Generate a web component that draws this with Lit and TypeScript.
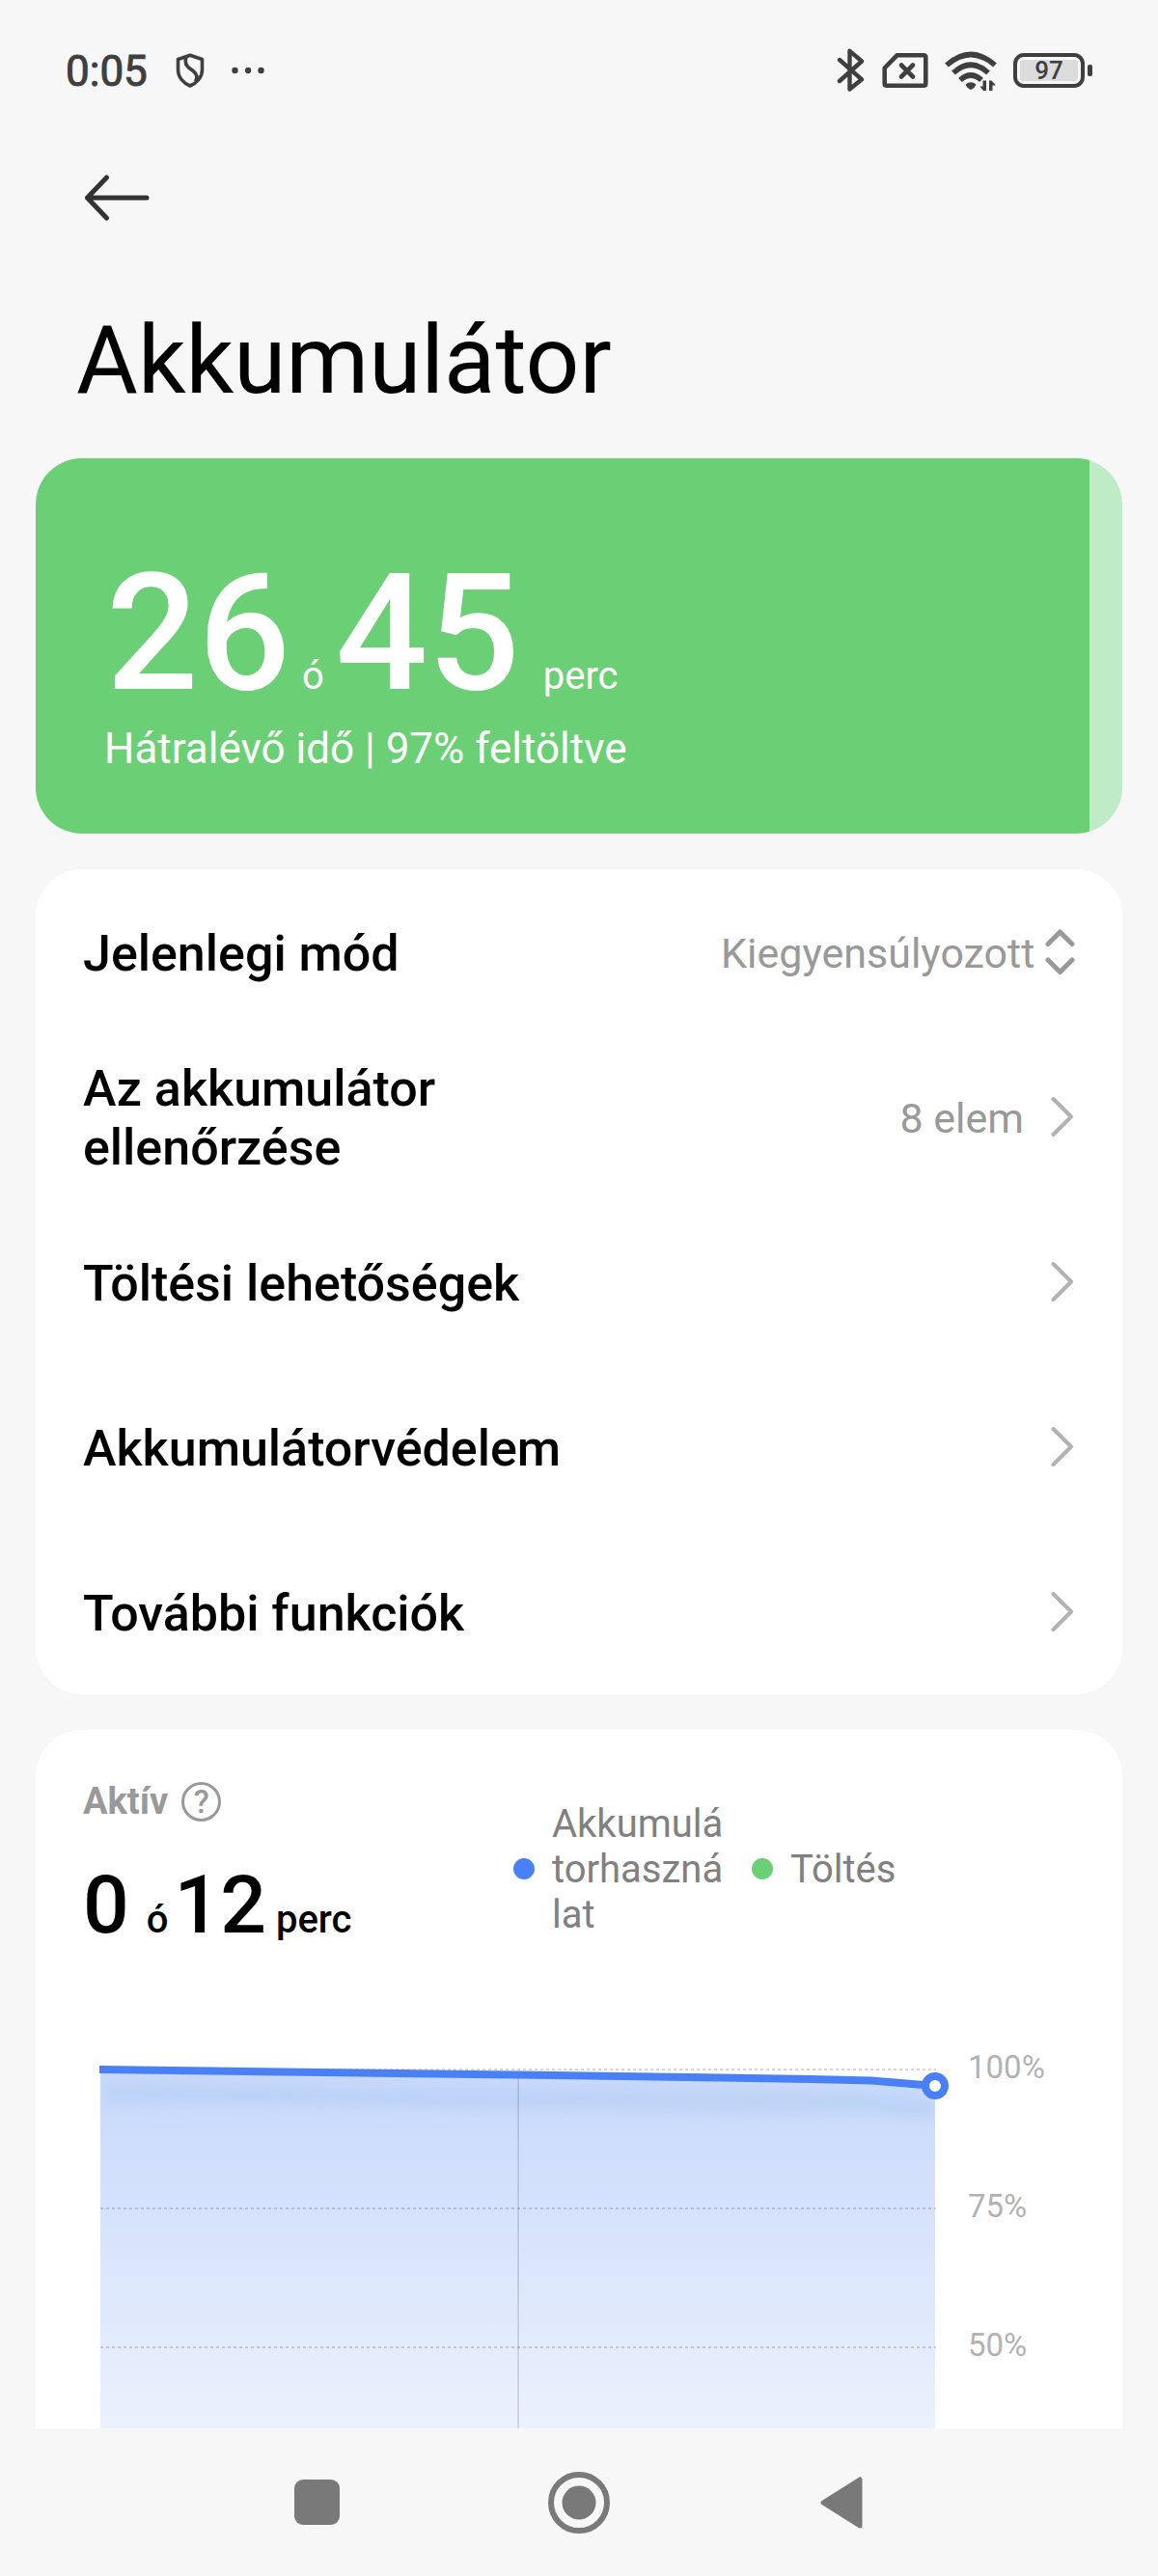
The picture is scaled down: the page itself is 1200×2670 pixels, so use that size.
import { LitElement, html, css, svg, nothing } from "lit";
import { customElement, property } from "lit/decorators.js";

const chevron = html`<svg class="chevron" width="25" height="43" viewBox="0 0 25 43" aria-hidden="true">
  <path d="M2.500 3 L21 21.500 L2.500 40" fill="none" stroke="#b2b2b2" stroke-width="4" stroke-linecap="round" stroke-linejoin="round" />
</svg>`;

@customElement("status-bar")
class StatusBar extends LitElement {
  static styles = css`
    :host {
      display: flex;
      align-items: center;
      justify-content: space-between;
      height: 146px;
      padding: 0 68px;
      box-sizing: border-box;
      color: #3f3f3f;
    }
    .side {
      display: flex;
      align-items: center;
    }
    .time {
      padding-top: 2px;
      font-size: 44px;
      line-height: 50px;
      margin-right: 29px;
      -webkit-text-stroke: 1px #3f3f3f;
    }
    .dots {
      margin-left: 28px;
    }
    .right {
      gap: 17px;
    }
    .battery {
      display: flex;
      align-items: center;
      gap: 3px;
    }
    .cell {
      display: flex;
      box-sizing: border-box;
      width: 74px;
      height: 36px;
      padding: 3px;
      border: 4px solid #3f3f3f;
      border-radius: 11px;
    }
    .level {
      flex: 1;
      border-radius: 3px;
      background: #dcdcdc;
      text-align: center;
      font-size: 26px;
      line-height: 22px;
      font-weight: 500;
    }
    .tip {
      width: 5px;
      height: 12px;
      border-radius: 2px;
      background: #3f3f3f;
    }
    svg {
      display: block;
    }
  `;

  render() {
    return html`
      <div class="side">
        <span class="time">0:05</span>
        <svg width="30" height="36" viewBox="0 0 30 36" fill="none" stroke="#3f3f3f" stroke-width="3.600" stroke-linejoin="round" aria-hidden="true">
          <path d="M15 2.200 L27.500 6.500 V17.500 C27.500 25 22 31 15 34 C8 31 2.500 25 2.500 17.500 V6.500 Z" />
          <path d="M10.800 4.500 C9.500 9.500 10.500 13 14 15.500 L18.500 18.800 C22.500 22 23 25.500 20.500 29.500" />
        </svg>
        <svg class="dots" width="34" height="8" viewBox="0 0 34 8" fill="#3f3f3f" aria-hidden="true">
          <circle cx="3.500" cy="4" r="3.200" />
          <circle cx="17" cy="4" r="3.200" />
          <circle cx="30.500" cy="4" r="3.200" />
        </svg>
      </div>
      <div class="side right">
        <svg width="30" height="46" viewBox="0 0 30 46" fill="none" stroke="#3f3f3f" stroke-width="4.400" stroke-linecap="round" stroke-linejoin="round" aria-hidden="true">
          <path d="M3 12 L26 32.300 L13.500 42.500 V2.800 L26 13.500 L3 34" />
        </svg>
        <svg width="48" height="38" viewBox="0 0 48 38" fill="none" stroke="#3f3f3f" stroke-width="4.600" stroke-linecap="round" stroke-linejoin="round" aria-hidden="true">
          <path d="M15.500 3.300 H43 Q45.300 3.300 45.300 5.600 V32.500 Q45.300 34.800 43 34.800 H5 Q2.700 34.800 2.700 32.500 V16.500 Z" />
          <path d="M20 13.500 L32 25.500 M32 13.500 L20 25.500" />
        </svg>
        <svg width="54" height="42" viewBox="0 0 54 42" aria-hidden="true">
          <g fill="none" stroke="#3f3f3f" stroke-width="5.600">
            <path d="M2 15.500 Q27 -6.500 52 15.500" />
            <path d="M9 23.500 Q27 7 45 23.500" />
            <path d="M16 31 Q27 21 38 31" />
          </g>
          <path d="M21.500 35.500 Q27 31 32.500 35.500 Q31 39.500 27 41 Q23 39.500 21.500 35.500 Z" fill="#3f3f3f" />
          <path d="M39.500 31.500 H43 V42 H40 L36.500 37.500 H39.500 Z M46 31.500 H48.500 L53 36.500 H49.500 V42 H46 Z" fill="#3f3f3f" />
        </svg>
        <span class="battery">
          <span class="cell"><span class="level">97</span></span>
          <span class="tip"></span>
        </span>
      </div>
    `;
  }
}

@customElement("battery-card")
class BatteryCard extends LitElement {
  @property({ type: Number }) level = 97;

  static styles = css`
    :host {
      display: block;
    }
    .card {
      display: grid;
      height: 389px;
      border-radius: 48px;
      overflow: hidden;
      background: #c0ebc7;
      color: #fff;
    }
    .fill,
    .body {
      grid-area: 1 / 1;
    }
    .fill {
      background: #6bd075;
    }
    .body {
      padding: 88px 71px 0;
    }
    .time {
      display: flex;
      align-items: baseline;
      margin: 0;
      padding-left: 2px;
    }
    .number {
      font-size: 168px;
      line-height: 188px;
      font-weight: 500;
    }
    .unit {
      font-size: 40px;
      line-height: 48px;
      margin: 0 12px;
    }
    .unit:last-child {
      margin-left: 24px;
    }
    .note {
      margin: 0;
      font-size: 44px;
      line-height: 50px;
    }
  `;

  render() {
    return html`
      <section class="card">
        <div class="fill" style="width: ${this.level}%"></div>
        <div class="body">
          <p class="time">
            <span class="number">26</span><span class="unit">ó</span><span class="number">45</span><span class="unit">perc</span>
          </p>
          <p class="note">Hátralévő idő | ${this.level}% feltöltve</p>
        </div>
      </section>
    `;
  }
}

interface Entry {
  label: string;
  value?: string;
}

@customElement("settings-list")
class SettingsList extends LitElement {
  private entries: Entry[] = [
    { label: "Az akkumulátor ellenőrzése", value: "8 elem" },
    { label: "Töltési lehetőségek" },
    { label: "Akkumulátorvédelem" },
    { label: "További funkciók" },
  ];

  static styles = css`
    :host {
      display: block;
      border-radius: 48px;
      background: #fff;
    }
    .row {
      display: flex;
      align-items: center;
      justify-content: space-between;
      min-height: 171px;
      box-sizing: border-box;
      padding: 0 49px;
      color: #000;
      text-decoration: none;
    }
    .label {
      max-width: 50%;
      padding-top: 3px;
      font-size: 52px;
      line-height: 61px;
      font-weight: 500;
    }
    .end {
      display: flex;
      align-items: center;
    }
    .value,
    .mode {
      font-family: inherit;
      font-size: 43px;
      line-height: 50px;
      color: #999;
    }
    .value {
      padding-top: 2px;
      margin-right: 28px;
    }
    .mode {
      appearance: none;
      border: 0;
      margin: 0;
      padding: 2px 10px 0 0;
      background: none;
    }
    svg {
      display: block;
    }
  `;

  render() {
    return html`
      <div class="row">
        <label class="label" for="mode">Jelenlegi mód</label>
        <span class="end">
          <select class="mode" id="mode">
            <option>Kiegyensúlyozott</option>
          </select>
          <svg width="31" height="48" viewBox="0 0 31 48" fill="none" stroke="#999" stroke-width="5" stroke-linecap="round" stroke-linejoin="round" aria-hidden="true">
            <path d="M3 15.500 L15.500 3 L28 15.500 M3 32 L15.500 44.500 L28 32" />
          </svg>
        </span>
      </div>
      ${this.entries.map(
        (entry) => html`
          <a class="row" href="#">
            <span class="label">${entry.label}</span>
            <span class="end">
              ${entry.value ? html`<span class="value">${entry.value}</span>` : nothing} ${chevron}
            </span>
          </a>
        `
      )}
    `;
  }
}

@customElement("usage-card")
class UsageCard extends LitElement {
  static styles = css`
    :host {
      display: block;
      border-radius: 48px 48px 0 0;
      background: #fff;
    }
    .head {
      display: grid;
      grid-template-columns: 446px 1fr;
      padding: 47px 49px 0;
      height: 338px;
      box-sizing: border-box;
    }
    .active {
      display: flex;
      align-items: center;
      gap: 14px;
      margin: 0;
      font-size: 38px;
      line-height: 54px;
      font-weight: 700;
      color: #999;
    }
    .help {
      display: grid;
      place-items: center;
      box-sizing: border-box;
      width: 41px;
      height: 41px;
      padding: 0;
      border: 3px solid #999;
      border-radius: 50%;
      background: none;
      color: #999;
      font-family: inherit;
      font-size: 33px;
      line-height: 35px;
      font-weight: 500;
    }
    .time {
      display: flex;
      align-items: baseline;
      margin: 32px 0 0;
      font-weight: 500;
    }
    .number {
      font-size: 84px;
      line-height: 98px;
    }
    .unit {
      font-size: 40px;
      line-height: 48px;
      margin: 0 6px 0 18px;
    }
    .unit:last-child {
      margin-left: 10px;
    }
    .legend {
      display: flex;
      align-items: center;
      align-self: start;
      gap: 26px;
      margin: 0;
      padding: 25px 0 0;
      list-style: none;
    }
    .item {
      display: flex;
      align-items: center;
      gap: 18px;
      font-size: 40px;
      line-height: 47px;
      color: #808080;
    }
    .dot {
      flex: none;
      width: 22px;
      height: 22px;
      border-radius: 50%;
    }
    .use {
      background: #4a80f5;
    }
    .charge {
      background: #6bd075;
    }
    .text {
      max-width: 181px;
      padding-top: 2px;
      word-break: break-all;
    }
    .chart {
      display: grid;
      grid-template-columns: 1fr 194px;
      padding-left: 67px;
    }
    .plot {
      display: block;
      width: 100%;
      overflow: visible;
    }
    .scale {
      display: flex;
      flex-direction: column;
      margin: 0;
      padding: 0 0 0 34px;
      list-style: none;
    }
    .mark {
      height: 144px;
      font-size: 33px;
      line-height: 24px;
      color: #b2b2b2;
    }
    .mark:last-child {
      height: 24px;
    }
  `;

  render() {
    // Plot units: x runs along the time axis, the 100% gridline is at y = 14, 25% steps are 144 apart.
    const curve = "0,14 433,19.500 736,24 799,25.500 865,31";
    return html`
      <section>
        <div class="head">
          <div>
            <p class="active">Aktív <button class="help" type="button">?</button></p>
            <p class="time">
              <span class="number">0</span><span class="unit">ó</span><span class="number">12</span><span class="unit">perc</span>
            </p>
          </div>
          <ul class="legend">
            <li class="item"><span class="dot use"></span><span class="text">Akkumulátorhasználat</span></li>
            <li class="item"><span class="dot charge"></span><span class="text">Töltés</span></li>
          </ul>
        </div>
        <div class="chart">
          <svg class="plot" viewBox="0 0 865 386" aria-hidden="true">
            <defs>
              <linearGradient id="area" x1="0" y1="0" x2="0" y2="1">
                <stop offset="0" stop-color="#c6d8fb" />
                <stop offset="0.500" stop-color="#dae5fc" />
                <stop offset="1" stop-color="#ebf1fd" />
              </linearGradient>
              <clipPath id="under"><polygon points="${curve} 865,386 0,386" /></clipPath>
              <filter id="soft" x="-10%" y="-200%" width="120%" height="500%">
                <feGaussianBlur stdDeviation="6" />
              </filter>
            </defs>
            <polygon points="${curve} 865,386 0,386" fill="url(#area)" />
            <g clip-path="url(#under)">
              <polyline points="6,39 433,44 736,48 799,49 865,55" fill="none" stroke="#bcd3f7" stroke-width="20" filter="url(#soft)" />
            </g>
            ${[14, 158, 302].map(
              (y) => svg`<line x1="0" x2="866" y1=${y} y2=${y} stroke="#000" stroke-opacity="0.160" stroke-width="2" stroke-dasharray="3 3" />`
            )}
            <line x1="433" x2="433" y1="16" y2="386" stroke="#000" stroke-opacity="0.110" stroke-width="2" />
            <polyline points="-1,14 ${curve}" fill="none" stroke="#4a80f5" stroke-width="8" stroke-linejoin="round" />
            <circle cx="865" cy="31" r="10" fill="#fff" stroke="#4a80f5" stroke-width="8" />
          </svg>
          <ol class="scale">
            <li class="mark">100%</li>
            <li class="mark">75%</li>
            <li class="mark">50%</li>
          </ol>
        </div>
      </section>
    `;
  }
}

@customElement("nav-bar")
class NavBar extends LitElement {
  static styles = css`
    :host {
      display: flex;
      justify-content: center;
      height: 153px;
      background: #f7f7f7;
    }
    .key {
      display: grid;
      place-items: center;
      width: 272px;
      padding: 0;
      border: 0;
      background: none;
    }
  `;

  render() {
    return html`
      <button class="key" type="button" aria-label="Legutóbbiak">
        <svg width="47" height="47" viewBox="0 0 47 47" aria-hidden="true"><rect width="47" height="47" rx="9" fill="#797979" /></svg>
      </button>
      <button class="key" type="button" aria-label="Kezdőképernyő">
        <svg width="64" height="64" viewBox="0 0 64 64" aria-hidden="true">
          <circle cx="32" cy="32" r="29" fill="none" stroke="#797979" stroke-width="6" />
          <circle cx="32" cy="32" r="17.500" fill="#797979" />
        </svg>
      </button>
      <button class="key" type="button" aria-label="Vissza">
        <svg width="44" height="54" viewBox="0 0 44 54" aria-hidden="true">
          <path d="M3 27 L41 3 V51 Z" fill="#797979" stroke="#797979" stroke-width="5" stroke-linejoin="round" />
        </svg>
      </button>
    `;
  }
}

@customElement("app-root")
class AppRoot extends LitElement {
  static styles = css`
    :host {
      display: block;
      min-height: 100vh;
      background: #f7f7f7;
      font-family: Roboto, "Noto Sans", sans-serif;
    }
    .top {
      padding: 0 79px 44px;
    }
    .back {
      display: flex;
      align-items: center;
      width: 84px;
      height: 117px;
      padding-left: 8px;
      box-sizing: border-box;
    }
    .title {
      margin: 53px 0 0;
      font-size: 98px;
      line-height: 115px;
      font-weight: 400;
      color: #000;
    }
    .cards {
      display: flex;
      flex-direction: column;
      gap: 37px;
      padding: 0 37px;
    }
  `;

  render() {
    return html`
      <status-bar></status-bar>
      <header class="top">
        <a class="back" href="#" aria-label="Vissza">
          <svg width="68" height="48" viewBox="0 0 68 48" fill="none" stroke="#333" stroke-width="5" stroke-linecap="round" stroke-linejoin="round" aria-hidden="true">
            <path d="M65 24 H3.500 M23.500 3 L3.500 24 L23.500 45" />
          </svg>
        </a>
        <h1 class="title">Akkumulátor</h1>
      </header>
      <main class="cards">
        <battery-card></battery-card>
        <settings-list></settings-list>
        <usage-card></usage-card>
      </main>
      <nav-bar></nav-bar>
    `;
  }
}
